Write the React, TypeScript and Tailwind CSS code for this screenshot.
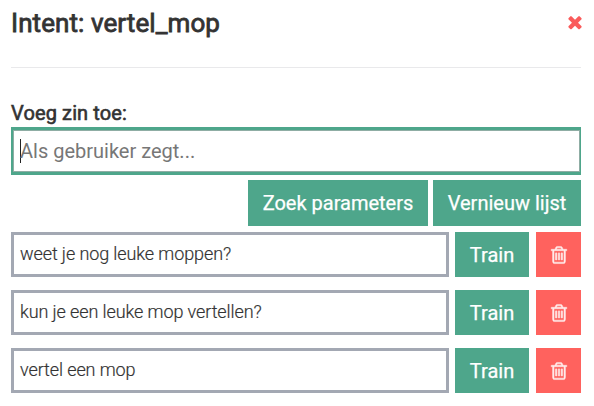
import React from "react";

const TRASH =
  "M704 736v576q0 14-9 23t-23 9h-64q-14 0-23-9t-9-23v-576q0-14 9-23t23-9h64q14 0 23 9t9 23zm256 0v576q0 14-9 23t-23 9h-64q-14 0-23-9t-9-23v-576q0-14 9-23t23-9h64q14 0 23 9t9 23zm256 0v576q0 14-9 23t-23 9h-64q-14 0-23-9t-9-23v-576q0-14 9-23t23-9h64q14 0 23 9t9 23zm128 724v-948h-896v948q0 22 7 40.5t14.5 27 10.5 8.5h832q3 0 10.5-8.5t14.5-27 7-40.5zm-672-1076h448l-48-117q-7-9-17-11h-317q-10 2-17 11zm928 32v64q0 14-9 23t-23 9h-96v948q0 83-47 143.5t-113 60.5h-832q-66 0-113-58.5t-47-141.5v-952h-96q-14 0-23-9t-9-23v-64q0-14 9-23t23-9h309l70-167q15-37 54-63t79-26h320q40 0 79 26t54 63l70 167h309q14 0 23 9t9 23z";
const TIMES =
  "M1490 1322q0 40-28 68l-136 136q-28 28-68 28t-68-28l-294-294-294 294q-28 28-68 28t-68-28l-136-136q-28-28-28-68t28-68l294-294-294-294q-28-28-28-68t28-68l136-136q28-28 68-28t68 28l294 294 294-294q28-28 68-28t68 28l136 136q28 28 28 68t-28 68l-294 294 294 294q28 28 28 68z";

function Icon({ d, className }: { d: string; className?: string }) {
  return (
    <svg viewBox="0 0 1792 1792" fill="currentColor" className={`size-5 ${className ?? ""}`}>
      <path d={d} />
    </svg>
  );
}

const sentences = ["weet je nog leuke moppen?", "kun je een leuke mop vertellen?", "vertel een mop"];

export default function App() {
  return (
    <div className="h-[406px] w-[594px] overflow-hidden bg-white pl-[11px] pr-[13px] font-['Roboto',sans-serif] text-[#333333]">
      <header className="flex h-[68px] items-start justify-between border-b border-[#e9e9eb] pt-2">
        <h1 className="text-[26px] leading-[30px] font-normal tracking-[0.08px] [-webkit-text-stroke:0.8px_#333333]">Intent: vertel_mop</h1>
        <button aria-label="Sluiten" className="-mr-[3.5px] mt-[4px] text-[#fa5b5b]">
          <Icon d={TIMES} />
        </button>
      </header>
      <main>
        <h2 className="mt-[33px] h-[26px] text-[20px] leading-6 font-normal tracking-[0.12px] [-webkit-text-stroke:0.6px_#333333]">Voeg zin toe:</h2>
        <div className="flex h-12 items-center border-y-3 border-l-2 border-r border-[#4ea68b] pl-[7px] shadow-[inset_0_0_0_1px_#8fada4]">
          <span className="h-6 w-px bg-[#222222]" />
          <span className="-ml-px text-[20px] leading-6 text-[#777777]">Als gebruiker zegt...</span>
        </div>
        <div className="mt-[5px] flex h-[46px] justify-end gap-[5px] text-[20px] text-white [-webkit-text-stroke:0.25px_#ffffff]">
          <button className="w-[180px] bg-[#4ea68b]">Zoek parameters</button>
          <button className="w-[148px] bg-[#4ea68b]">Vernieuw lijst</button>
        </div>
        <ul className="mt-[6px] flex flex-col gap-[13px]">
          {sentences.map((s) => (
            <li key={s} className="flex h-[45px]">
              <div className="flex w-[438px] items-center border-3 border-[#a3a8b3] pl-[6px] pb-px text-[18px] leading-6 font-light tracking-[-0.1px] [-webkit-text-stroke:0.2px_#333333]">
                {s}
              </div>
              <button className="ml-[6px] w-[74px] bg-[#4ea68b] text-[20px] text-white [-webkit-text-stroke:0.25px_#ffffff]">Train</button>
              <button aria-label="Verwijderen" className="ml-[7px] flex w-[45px] items-center justify-center bg-[#ff625e] text-[#ffeceb]">
                <Icon d={TRASH} className="stroke-current [stroke-width:44]" />
              </button>
            </li>
          ))}
        </ul>
      </main>
    </div>
  );
}
